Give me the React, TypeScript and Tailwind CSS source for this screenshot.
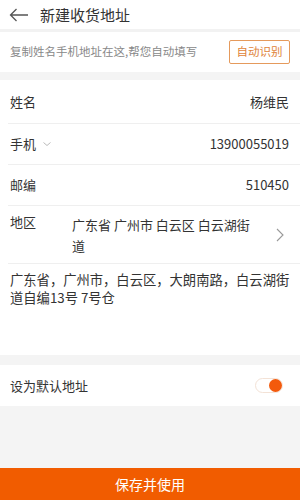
import React from "react";

const font = { fontFamily: '"Noto Sans CJK SC", "Noto Sans", sans-serif' };

export default function App() {
  return (
    <div className="w-[300px] h-[500px] bg-[#f4f4f4] flex flex-col overflow-hidden text-[#333]" style={font}>
      <div className="h-[29px] bg-white flex items-center shrink-0">
        <svg width="20" height="14" viewBox="0 0 20 14" className="ml-[9px]">
          <path d="M19 7H1.5M7.5 1L1.5 7l6 6" fill="none" stroke="#555" strokeWidth="1.3" />
        </svg>
        <span className="ml-[11px] text-[15px] leading-none text-[#333]">新建收货地址</span>
      </div>
      <div className="h-[3px] bg-[#f2f2f2] shrink-0" />
      <div className="h-[40px] bg-white flex items-center justify-between px-[10px] shrink-0">
        <span className="text-[11.5px] text-[#888]">复制姓名手机地址在这,帮您自动填写</span>
        <div className="w-[61px] h-[24px] border border-[#e59a5c] rounded-[2px] flex items-center justify-center text-[11.5px] text-[#e0843a]">
          自动识别
        </div>
      </div>
      <div className="h-[8px] shrink-0" />
      <div className="bg-white shrink-0">
        <div className="h-[43px] flex items-center justify-between pl-[10px] pr-[11px] text-[13px]">
          <span>姓名</span>
          <span>杨维民</span>
        </div>
        <div className="ml-[8px] h-px bg-[#efefef]" />
        <div className="h-[40px] flex items-center justify-between pl-[10px] pr-[11px] text-[13px]">
          <span className="flex items-center">
            手机
            <svg width="8" height="6" viewBox="0 0 8 6" className="ml-[7px]">
              <path d="M0.5 1.5L4 4.5l3.5-3" fill="none" stroke="#bbb" strokeWidth="1" />
            </svg>
          </span>
          <span>13900055019</span>
        </div>
        <div className="ml-[8px] h-px bg-[#efefef]" />
        <div className="h-[40px] flex items-center justify-between pl-[10px] pr-[11px] text-[13px]">
          <span>邮编</span>
          <span>510450</span>
        </div>
        <div className="ml-[8px] h-px bg-[#efefef]" />
        <div className="h-[57px] flex items-center pl-[10px] pr-[16px] text-[13px]">
          <span className="w-[62px] self-start mt-[5px] leading-[21px]">地区</span>
          <span className="w-[186px] leading-[21px]">广东省 广州市 白云区 白云湖街道</span>
          <svg width="8" height="14" viewBox="0 0 8 14" className="ml-auto">
            <path d="M1 1l6 6-6 6" fill="none" stroke="#999" strokeWidth="1.1" />
          </svg>
        </div>
        <div className="ml-[8px] h-px bg-[#efefef]" />
        <div className="h-[91px] pl-[10px] pt-[7px]">
          <div className="w-[282px] text-[13.3px] leading-[18px]">
            广东省，广州市，白云区，大朗南路，白云湖街道自编13号 7号仓
          </div>
        </div>
      </div>
      <div className="h-[10px] shrink-0" />
      <div className="h-[41px] bg-white flex items-center justify-between pl-[10px] pr-[17px] text-[13px] shrink-0">
        <span>设为默认地址</span>
        <div className="w-[28px] h-[15px] rounded-full bg-white border border-[#f3e2d6] relative">
          <div className="absolute right-[0px] top-[0px] w-[13px] h-[13px] rounded-full bg-[#f35a0c]" />
        </div>
      </div>
      <div className="flex-1" />
      <div className="h-[32px] bg-[#f15c00] flex items-center justify-center text-white text-[14px] shrink-0">
        保存并使用
      </div>
    </div>
  );
}
